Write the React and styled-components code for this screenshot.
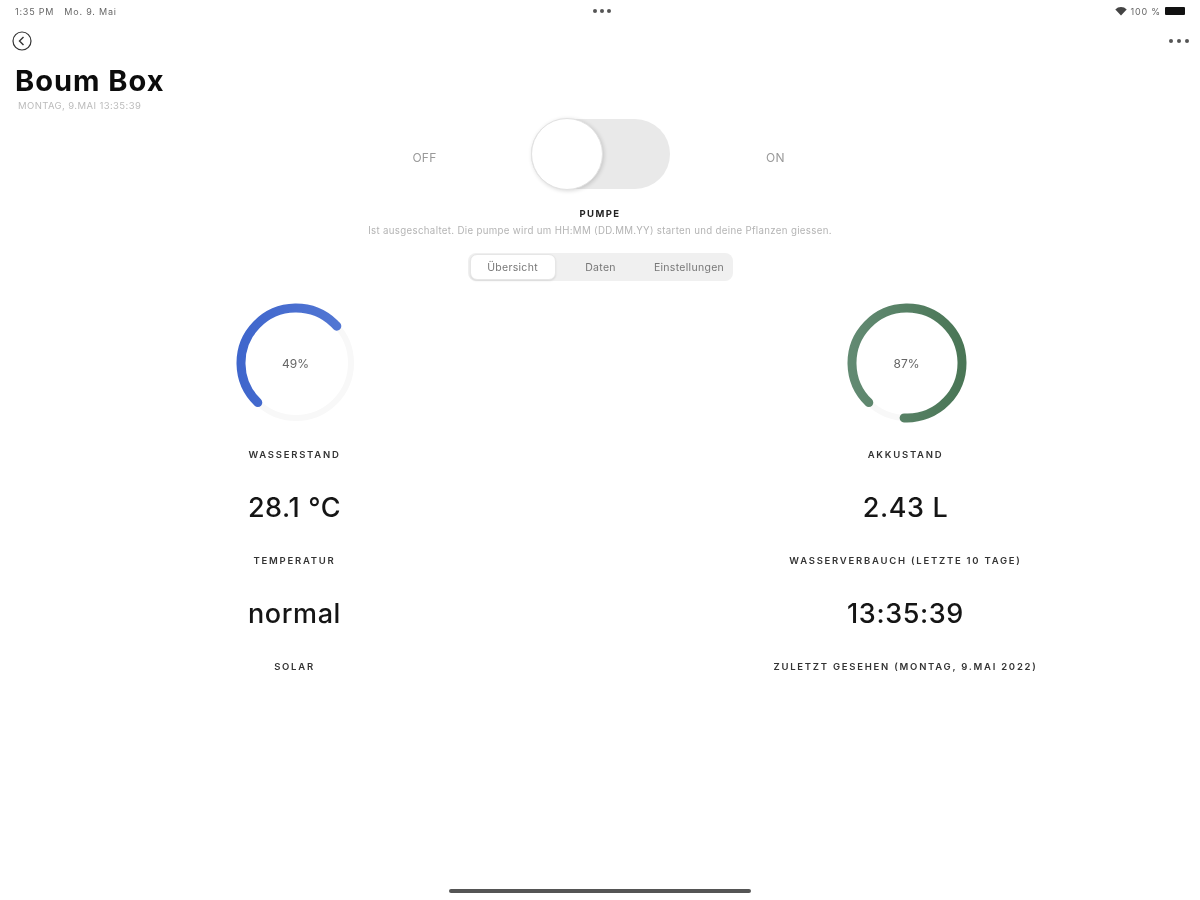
import styled, { createGlobalStyle } from "styled-components";

const GlobalStyle = createGlobalStyle`
    html, body { margin: 0; padding: 0; background: #fff; }
    body { font-family: Inter, "Liberation Sans", sans-serif; color: #111; }
`
const Page = styled.div`
    width: 1200px;
    height: 900px;
    display: flex;
    flex-direction: column;
    overflow: hidden;
    background: #fff;
    filter: blur(0.6px);
`
const StatusBar = styled.div`
    height: 22px;
    padding: 0 12px 0 15px;
    display: grid;
    grid-template-columns: 1fr auto 1fr;
    align-items: center;
    font-size: 9px;
    letter-spacing: 0.8px;
    color: #666;
`
const StatusLeft = styled.div`
    display: flex;
    gap: 10px;
`
const StatusRight = styled.div`
    display: flex;
    justify-content: flex-end;
    align-items: center;
    gap: 4px;
`
const Dots = styled.div`
    display: flex;
    gap: ${(p) => p.$gap}px;
    span {
        width: 4px;
        height: 4px;
        border-radius: 50%;
        background: #555;
    }
`
const Battery = styled.div`
    width: 23px;
    height: 8px;
    padding: 0 3px 0 0;
    border-radius: 2px;
    box-sizing: border-box;
    &::before {
        content: "";
        display: block;
        height: 100%;
        background: #111;
        border-radius: 1px;
    }
`
const NavBar = styled.div`
    height: 38px;
    padding: 0 11px 0 12px;
    display: flex;
    justify-content: space-between;
    align-items: center;
`
const Title = styled.h1`
    margin: 4px 0 0 15px;
    font-size: 29px;
    line-height: 34px;
    font-weight: 700;
    letter-spacing: 1px;
    color: #0c0c0c;
`
const Subtitle = styled.div`
    margin: 2px 0 0 18px;
    font-size: 9.5px;
    line-height: 12px;
    letter-spacing: 0.4px;
    color: #bbb;
`
const SwitchRow = styled.div`
    margin-top: 7px;
    display: flex;
    justify-content: center;
    align-items: center;
    gap: 76px;
`
const SwitchLabel = styled.div`
    width: 60px;
    padding-top: 6px;
    text-align: center;
    font-size: 12px;
    letter-spacing: 0.3px;
    color: #999;
`
const Track = styled.div`
    width: 139px;
    height: 70px;
    border-radius: 35px;
    background: #e9e9e9;
    display: flex;
    align-items: center;
`
const Knob = styled.div`
    width: 72px;
    height: 72px;
    box-sizing: border-box;
    border-radius: 50%;
    background: #fff;
    border: 1px solid #e2e2e2;
    box-shadow: 1px 1px 4px rgba(0, 0, 0, 0.16);
`
const PumpTitle = styled.div`
    margin-top: 18px;
    text-align: center;
    font-size: 9.5px;
    line-height: 14px;
    font-weight: 700;
    letter-spacing: 1.4px;
    color: #222;
`
const PumpText = styled.div`
    margin-top: 3px;
    text-align: center;
    font-size: 9.7px;
    line-height: 13px;
    letter-spacing: 0.32px;
    color: #b4b4b4;
`
const Tabs = styled.div`
    align-self: center;
    margin-top: 16px;
    width: 265px;
    height: 28px;
    box-sizing: border-box;
    padding: 1px 0 1px 2px;
    display: flex;
    border-radius: 8px;
    background: #f0f0f0;
`
const Tab = styled.div`
    flex: 0 0 ${(p) => p.$width}px;
    display: flex;
    justify-content: center;
    align-items: center;
    box-sizing: border-box;
    font-size: 10.5px;
    letter-spacing: 0.3px;
    color: #777;
    border-radius: 7px;
    ${(p) => p.$active && `
        background: #fff;
        border: 1px solid #e6e6e6;
        box-shadow: 0 1px 2px rgba(0, 0, 0, 0.1);
    `}
`
const Stats = styled.div`
    margin-top: 22px;
    display: grid;
    grid-template-columns: 300px 300px;
    column-gap: 311px;
    justify-content: center;
`
const Column = styled.div`
    display: flex;
    flex-direction: column;
    align-items: center;
`
const RingWrap = styled.div`
    position: relative;
    width: 120px;
    height: 120px;
    margin: 0 0 25px 2px;
`
const RingValue = styled.div`
    position: absolute;
    inset: 0;
    display: flex;
    justify-content: center;
    align-items: center;
    font-size: 12px;
    color: #666;
`
const Caption = styled.div`
    height: 14px;
    line-height: 14px;
    font-size: 9.5px;
    font-weight: 600;
    letter-spacing: 1.75px;
    white-space: nowrap;
    color: #333;
`
const Value = styled.div`
    margin: 26px 0 26px;
    height: 40px;
    line-height: 40px;
    font-size: 27px;
    font-weight: 500;
    letter-spacing: 0.6px;
    color: #151515;
`
const HomeBar = styled.div`
    margin-top: auto;
    margin-bottom: 7px;
    align-self: center;
    width: 302px;
    height: 4px;
    border-radius: 2px;
    background: #555;
`

const WifiIcon = () => (
    <svg width="12" height="10" viewBox="0 0 12 10">
        <path d="M6 9.5 0.3 3.4a8.2 8.2 0 0 1 11.4 0Z" fill="#444" />
    </svg>
)

const BackIcon = () => (
    <svg width="20" height="20" viewBox="0 0 20 20" fill="none" stroke="#333" strokeWidth="1.2">
        <circle cx="10" cy="10" r="9" />
        <path d="M11.5 6 7.5 10l4 4" strokeWidth="1.4" />
    </svg>
)

const Ring = ({ id, start, sweep, from, to, value }) => (
    <RingWrap>
        <svg width="120" height="120" viewBox="0 0 120 120" fill="none">
            <defs>
                <linearGradient
                    id={id}
                    x1="0"
                    y1="0"
                    x2="1"
                    y2="0"
                    gradientTransform={`rotate(${90 - start} 0.5 0.5)`}
                >
                    <stop offset="0" stopColor={from} />
                    <stop offset="1" stopColor={to} />
                </linearGradient>
            </defs>
            <circle cx="60" cy="60" r="55" stroke="#f8f8f8" strokeWidth="6" />
            <circle
                cx="60"
                cy="60"
                r="55"
                stroke={`url(#${id})`}
                strokeWidth="9"
                strokeLinecap="round"
                pathLength="360"
                strokeDasharray={`${sweep} 360`}
                transform={`rotate(${start - 90} 60 60)`}
            />
        </svg>
        <RingValue>{value}</RingValue>
    </RingWrap>
)

const Stat = ({ value, label }) => (
    <>
        <Value>{value}</Value>
        <Caption>{label}</Caption>
    </>
)

const App = () => (
    <Page>
        <GlobalStyle />
        <StatusBar>
            <StatusLeft>
                <span>1:35 PM</span>
                <span>Mo. 9. Mai</span>
            </StatusLeft>
            <Dots $gap={3}><span /><span /><span /></Dots>
            <StatusRight>
                <WifiIcon />
                <span>100 %</span>
                <Battery />
            </StatusRight>
        </StatusBar>
        <NavBar>
            <BackIcon />
            <Dots $gap={4}><span /><span /><span /></Dots>
        </NavBar>
        <Title>Boum Box</Title>
        <Subtitle>MONTAG, 9.MAI 13:35:39</Subtitle>

        <SwitchRow>
            <SwitchLabel>OFF</SwitchLabel>
            <Track><Knob /></Track>
            <SwitchLabel>ON</SwitchLabel>
        </SwitchRow>
        <PumpTitle>PUMPE</PumpTitle>
        <PumpText>Ist ausgeschaltet. Die pumpe wird um HH:MM (DD.MM.YY) starten und deine Pflanzen giessen.</PumpText>
        <Tabs>
            <Tab $active $width={86}>Übersicht</Tab>
            <Tab $width={90}>Daten</Tab>
            <Tab $width={87}>Einstellungen</Tab>
        </Tabs>

        <Stats>
            <Column>
                <Ring id="water" start={224} sweep={184} from="#3f66cc" to="#5478d4" value="49%" />
                <Caption>WASSERSTAND</Caption>
                <Stat value="28.1 °C" label="TEMPERATUR" />
                <Stat value="normal" label="SOLAR" />
            </Column>
            <Column>
                <Ring id="battery" start={224} sweep={319} from="#628a72" to="#4a7656" value="87%" />
                <Caption>AKKUSTAND</Caption>
                <Stat value="2.43 L" label="WASSERVERBAUCH (LETZTE 10 TAGE)" />
                <Stat value="13:35:39" label="ZULETZT GESEHEN (MONTAG, 9.MAI 2022)" />
            </Column>
        </Stats>
        <HomeBar />
    </Page>
)

export default App
